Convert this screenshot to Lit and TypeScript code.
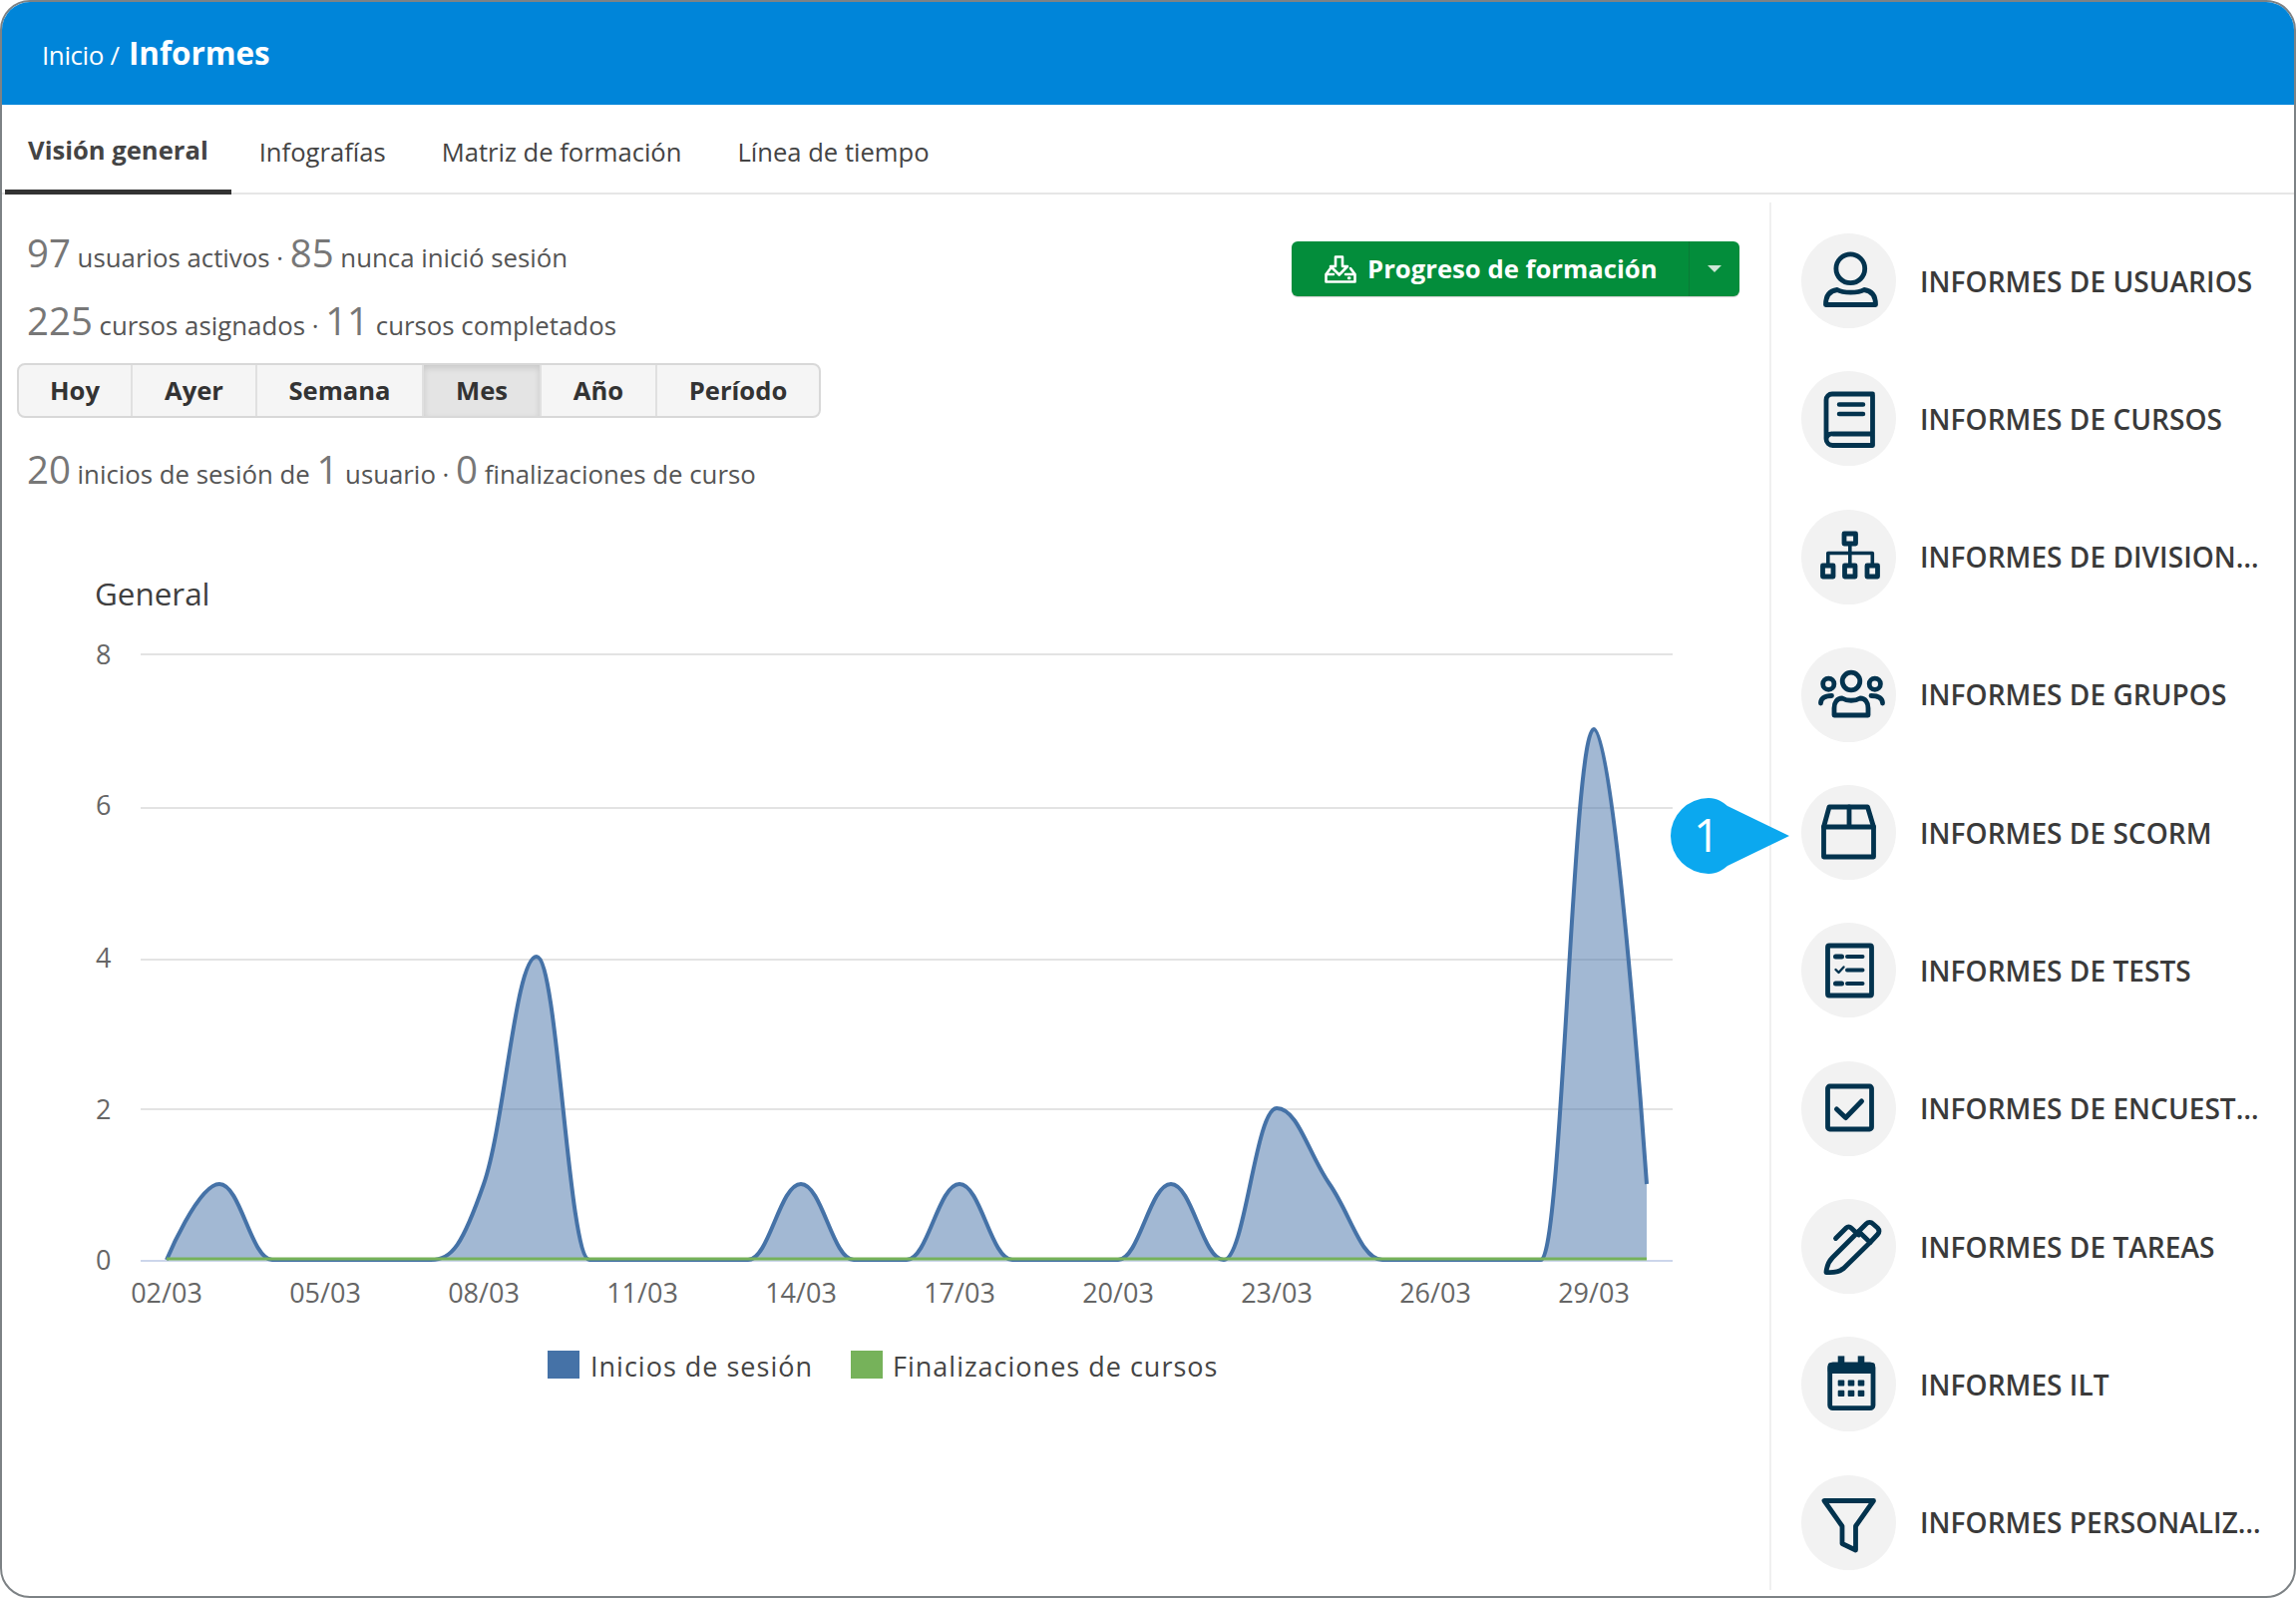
import { LitElement, html, css, svg } from "lit";
import { customElement } from "lit/decorators.js";

const DAYS = [0,1,0,0,0,0,1,4,0,0,0,0,1,0,0,1,0,0,0,1,0,2,1,0,0,0,0,7,1];
const px = (i: number) => 167 + 53 * i;
const py = (v: number) => 1262 - 76 * v;

function spline(): string {
  const pts = DAYS.map((v, i) => [px(i), py(v)]);
  let d = `M${pts[0][0]} ${pts[0][1]}`;
  const s = 1.5, den = s + 1;
  let lastR = pts[0];
  for (let i = 1; i < pts.length; i++) {
    const [x, y] = pts[i];
    let left = [x, y], right = [x, y];
    if (i < pts.length - 1) {
      const [lx, ly] = pts[i - 1];
      const [nx, ny] = pts[i + 1];
      const lcx = (s * x + lx) / den;
      let lcy = (s * y + ly) / den;
      const rcx = (s * x + nx) / den;
      let rcy = (s * y + ny) / den;
      const c = ((rcy - lcy) * (rcx - x)) / (rcx - lcx) + y - rcy;
      lcy += c; rcy += c;
      if (lcy > ly && lcy > y) { lcy = Math.max(ly, y); rcy = 2 * y - lcy; }
      else if (lcy < ly && lcy < y) { lcy = Math.min(ly, y); rcy = 2 * y - lcy; }
      if (rcy > ny && rcy > y) { rcy = Math.max(ny, y); lcy = 2 * y - rcy; }
      else if (rcy < ny && rcy < y) { rcy = Math.min(ny, y); lcy = 2 * y - rcy; }
      left = [lcx, lcy]; right = [rcx, rcy];
    }
    d += ` C${lastR[0].toFixed(1)} ${lastR[1].toFixed(1)} ${left[0].toFixed(1)} ${left[1].toFixed(1)} ${x} ${y}`;
    lastR = right;
  }
  return d;
}

const ICONS = [
  svg`<circle cx="33.3" cy="19.3" r="14.4"/><path d="M8.5 55.5 C8.5 47 12 41.5 20 40.5 C26 44 41 44 47 40.5 C55 41.5 58.5 47 58.5 55.5 Z"/>`,
  svg`<path d="M55.5 7 H15 A6 6 0 0 0 9 13 V52 A6.5 6.5 0 0 0 15.5 58.5 H55.5 V8 M55.5 47 H15.5 A5.5 5.5 0 0 0 9 52"/><path d="M22 17.5 H46 M22 27 H46" stroke-width="4.5"/>`,
  svg`<rect x="27" y="9" width="11.5" height="10"/><rect x="5.5" y="41" width="10.5" height="11"/><rect x="27.5" y="41" width="10.5" height="11"/><rect x="50" y="41" width="10.5" height="11"/><path d="M32.8 19 V41 M10.8 41 V28.5 H55.3 V41" stroke-width="3.6"/>`,
  svg`<circle cx="34" cy="19" r="8.8"/><circle cx="11.3" cy="21.7" r="5.6"/><circle cx="57.8" cy="21.7" r="5.6"/><path d="M17 53 V46 C17 40 20 36 25 36 C30 39 38 39 43 36 C48 36 51 40 51 46 V53 Z"/><path d="M3.5 41 C3.5 36.5 7 33.5 14.5 33.5 M65.5 41 C65.5 36.5 62 33.5 54 33.5"/>`,
  svg`<path d="M12 6 H50.5 L56.5 26 V56 H6.5 V26 Z"/><path d="M6.5 26 H56.5 M32 6 V26"/>`,
  svg`<rect x="10.5" y="7" width="44" height="50" rx="1.5"/><path d="M30 18 H45.5 M30 31.5 H45.5 M30 45 H45.5" stroke-width="4"/><path d="M18.5 18 H24.5 M18.5 45 H24.5" stroke-width="5"/><path d="M18.5 31 L21.5 34 L26.5 28.5" stroke-width="2.4"/>`,
  svg`<rect x="10.5" y="10" width="44" height="43" rx="2"/><path d="M19.5 33 L28.5 41.5 L44.5 25" stroke-width="5"/>`,
  svg`<path d="M9 57.5 C9.5 51 12 46 15.5 42.5 L41.5 16.5 L53 27.5 L26.5 53.5 C22 57 15 58 9 57.5 Z"/><path d="M41.5 16.5 L49 9 C51 7 54 7 56 9 L60.5 13 C62.5 15 62.5 17.5 60.5 19.5 L53 27.5"/><path d="M18.5 23.5 L29 13 C30.5 11.5 32.5 11.5 34 13 L41.5 20"/>`,
  svg`<rect x="12.7" y="12" width="43.3" height="43.7" rx="3"/><g fill="#03334e" stroke="none"><rect x="10.7" y="10" width="47.3" height="11" rx="3"/><rect x="20.7" y="3.4" width="6.6" height="8"/><rect x="40.7" y="3.4" width="6.6" height="8"/><rect x="20.7" y="27.4" width="6.6" height="6" rx="1"/><rect x="30.7" y="27.4" width="6.6" height="6" rx="1"/><rect x="40.7" y="27.4" width="6.6" height="6" rx="1"/><rect x="20.7" y="37.7" width="6.6" height="6.3" rx="1"/><rect x="30.7" y="37.7" width="6.6" height="6.3" rx="1"/><rect x="40.7" y="37.7" width="6.6" height="6.3" rx="1"/></g>`,
  svg`<path d="M7 10.5 H56.5 L38.5 36 V60 L25 53.5 V36 Z"/>`,
];

const LABELS = [
  "INFORMES DE USUARIOS", "INFORMES DE CURSOS", "INFORMES DE DIVISIONES", "INFORMES DE GRUPOS",
  "INFORMES DE SCORM", "INFORMES DE TESTS", "INFORMES DE ENCUESTAS", "INFORMES DE TAREAS",
  "INFORMES ILT", "INFORMES PERSONALIZADOS",
];
const RANGES = ["Hoy", "Ayer", "Semana", "Mes", "Año", "Período"];
const TABS = ["Visión general", "Infografías", "Matriz de formación", "Línea de tiempo"];
const GRID = [[8, 655], [6, 809], [4, 961], [2, 1111], [0, 1263]];
const LABEL_BASE: Record<number, number> = { 8: 665, 6: 816, 4: 969, 2: 1121, 0: 1272 };
const XL = ["02/03","05/03","08/03","11/03","14/03","17/03","20/03","23/03","26/03","29/03"];

@customElement("app-root")
export class AppRoot extends LitElement {
  static styles = css`
    :host { display: block; width: 2302px; height: 1602px; font-family: "Open Sans", sans-serif; background: #fff; }
    .win { position: relative; box-sizing: border-box; width: 2302px; height: 1602px; border: 2px solid #7d8285; border-radius: 30px; overflow: hidden; display: flex; flex-direction: column; background: #fff; }
    .head { height: 103px; background: #0085d9; color: #fff; display: flex; align-items: baseline; padding: 29px 0 0 40px; box-sizing: border-box; font-size: 26px; font-weight: 400; flex: none; letter-spacing: -0.4px; white-space: pre; }
    .head b { font-size: 31.4px; font-weight: 700; margin-left: 3px; letter-spacing: 0; }
    .tabs { height: 90px; flex: none; box-sizing: border-box; border-bottom: 2px solid #e6e6e6; display: flex; padding-left: 3px; }
    .tab { box-sizing: border-box; height: 90px; padding: 30px 28px 0; font-size: 25.6px; color: #444; white-space: nowrap; }
    .tab.on { font-weight: 700; color: #444; padding: 28px 23px 0 23px; border-bottom: 5px solid #333; }
    .body { flex: 1; display: flex; min-height: 0; }
    .main { width: 1772px; flex: none; display: flex; flex-direction: column; position: relative; }
    .top { display: flex; justify-content: space-between; }
    .stats { padding: 32px 0 0 25px; }
    .line { font-size: 25.8px; color: #555; height: 68px; line-height: 52px; white-space: nowrap; }
    .line span { font-size: 38.4px; font-weight: 400; color: #777; }
    .btn { margin: 47px 30px 0 0; width: 449px; height: 55px; border-radius: 6px; background: #038d3b; color: #fff; display: flex; font-weight: 700; font-size: 25.7px; box-shadow: 0 1px 1px rgba(0,0,0,.2); }
    .btn .l { flex: 1; display: flex; align-items: center; gap: 11px; padding-left: 33px; border-right: 1px solid #0a7a37; }
    .btn .r { width: 50px; display: flex; align-items: center; justify-content: center; }
    .caret { width: 0; height: 0; border-left: 7px solid transparent; border-right: 7px solid transparent; border-top: 7px solid #cde6d6; }
    .group { display: flex; margin: 1px 0 0 15px; width: max-content; height: 55px; border: 2px solid #d8d8d8; border-radius: 8px; background: #f5f5f5; box-sizing: border-box; }
    .group div { box-sizing: border-box; display: flex; align-items: center; justify-content: center; font-weight: 700; font-size: 25.6px; color: #333; border-right: 2px solid #e0e0e0; }
    .group div:last-child { border-right: 0; }
    .group .on { background: #e4e4e4; box-shadow: inset 0 3px 6px rgba(0,0,0,.12); }
    .third { padding: 25px 0 0 25px; }
    svg.chart { display: block; width: 1772px; height: 1000px; position: absolute; left: -2px; top: 306px; overflow: visible; }
    .chart text { font-family: "Open Sans", sans-serif; }
    .side { flex: 1; margin: 8px 0 6px; border-left: 2px solid #f0f0f0; padding: 31px 0 0 30px; display: flex; flex-direction: column; gap: 43.3px; box-sizing: border-box; min-width: 0; }
    .row { display: flex; align-items: center; gap: 24px; height: 95px; flex: none; }
    .circle { width: 95px; height: 95px; border-radius: 50%; background: #f2f2f2; flex: none; display: flex; align-items: center; justify-content: center; }
    .circle svg { width: 64px; height: 64px; overflow: visible; fill: none; stroke: #03334e; stroke-width: 4.8; stroke-linejoin: round; stroke-linecap: round; }
    .txt { font-size: 28px; font-weight: 600; color: #3a3a3a; white-space: nowrap; overflow: hidden; text-overflow: ellipsis; max-width: 346px; letter-spacing: 0.05px; }
    .call { position: absolute; left: 1670px; top: 794px; width: 126px; height: 84px; }
    .call svg { width: 126px; height: 84px; display: block; }
    .call span { position: absolute; left: 26px; top: 9px; font-size: 46px; font-weight: 400; color: #fff; line-height: 62px; }
  `;

  render() {
    const line = spline();
    const area = `${line} L${px(DAYS.length - 1)} 1262 L167 1262 Z`;
    const widths = [114, 125, 167, 118, 116, 162];
    return html`<div class="win">
      <div class="head">Inicio / <b>Informes</b></div>
      <div class="tabs">${TABS.map((t, i) => html`<div class="tab ${i === 0 ? "on" : ""}">${t}</div>`)}</div>
      <div class="body">
        <div class="main">
          <div class="top">
            <div class="stats">
              <div class="line"><span>97</span> usuarios activos · <span>85</span> nunca inició sesión</div>
              <div class="line"><span>225</span> cursos asignados · <span>11</span> cursos completados</div>
            </div>
            <div class="btn">
              <div class="l">
                <svg width="32" height="30" viewBox="0 0 32 30" fill="none" stroke="#fff" stroke-width="2.6" stroke-linejoin="round" stroke-linecap="round"><path d="M11 2.5 H18 V12 H23 L14.7 20.5 L6 12 H11 Z"/><path d="M6 14 L1.5 20 V27.5 H30.5 V20 L26 14 M1.5 20 H9 M21 20 H30.5"/><path d="M24.3 23.7 H25" stroke-width="3"/></svg>
                Progreso de formación
              </div>
              <div class="r"><div class="caret"></div></div>
            </div>
          </div>
          <div class="group">${RANGES.map((r, i) => html`<div class="${i === 3 ? "on" : ""}" style="width:${widths[i]}px">${r}</div>`)}</div>
          <div class="third line"><span>20</span> inicios de sesión de <span>1</span> usuario · <span>0</span> finalizaciones de curso</div>
          <svg class="chart" viewBox="0 500 1772 1000">
            <text x="95" y="606" font-size="31.4" fill="#3f3f3f">General</text>
            ${GRID.map(([v, y]) => svg`
              <line x1="141" x2="1677" y1=${y} y2=${y} stroke=${v ? "#e3e3e3" : "#ccd6eb"} stroke-width="2"/>
              <text x="96" y=${LABEL_BASE[v]} font-size="27" fill="#666">${v}</text>`)}
            <path d=${area} fill="#4572a7" fill-opacity=".5"/>
            <path d=${line} fill="none" stroke="#4572a7" stroke-width="4" stroke-linejoin="round"/>
            <line x1="167" x2="1651" y1="1261" y2="1261" stroke="#76b25a" stroke-width="3"/>
            ${XL.map((t, i) => svg`<text x=${px(i * 3)} y="1305" font-size="27" fill="#666" text-anchor="middle">${t}</text>`)}
            <rect x="549" y="1353" width="32" height="28" fill="#4572a7"/>
            <text x="592" y="1379" font-size="27" letter-spacing="1" fill="#444">Inicios de sesión</text>
            <rect x="853" y="1353" width="32" height="28" fill="#76b25a"/>
            <text x="895" y="1379" font-size="27" letter-spacing="1" fill="#444">Finalizaciones de cursos</text>
          </svg>
        </div>
        <div class="side">
          ${LABELS.map((l, i) => html`<div class="row"><div class="circle"><svg viewBox="0 0 64 64">${ICONS[i]}</svg></div><div class="txt">${l}</div></div>`)}
        </div>
      </div>
      <div class="call">
        <svg viewBox="0 0 126 84"><path d="M41 4 C50 4 55 8 60 12 L122 42 L60 72 C55 76 50 80 41 80 A38 38 0 0 1 41 4 Z" fill="#0ba8ef"/></svg>
        <span>1</span>
      </div>
    </div>`;
  }
}
